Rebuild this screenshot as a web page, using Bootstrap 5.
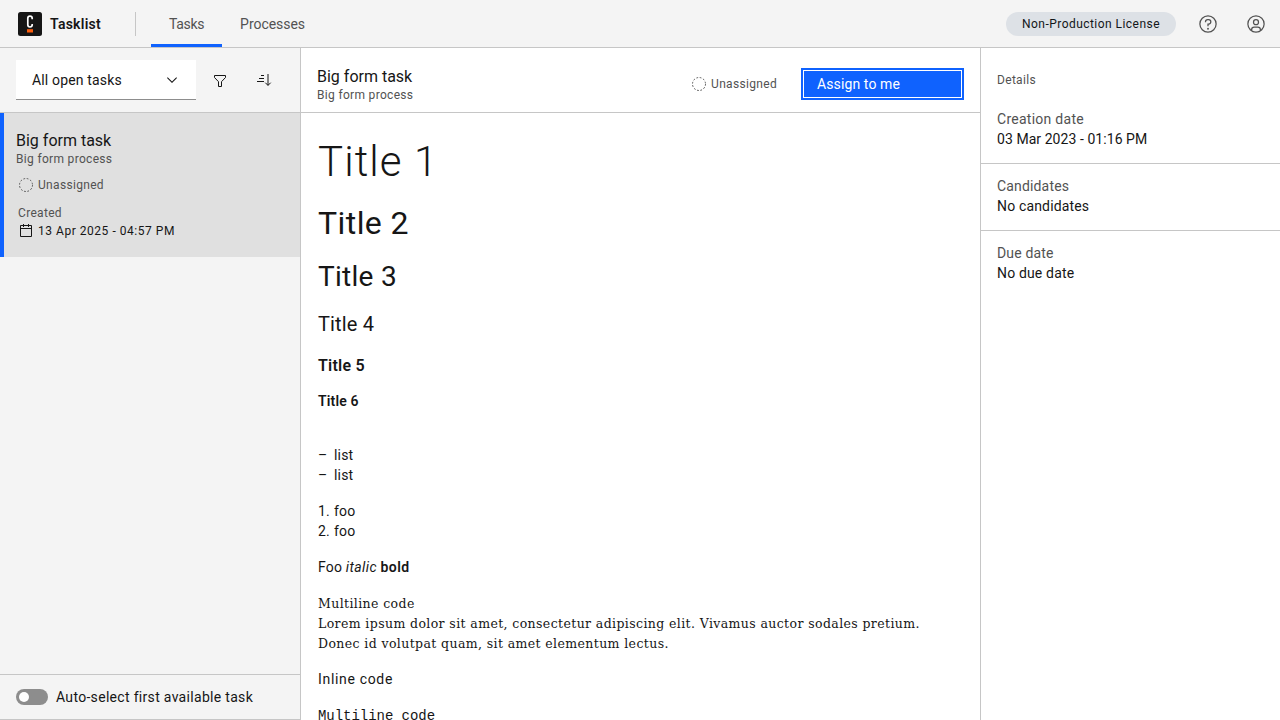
<!DOCTYPE html>
<html lang="en">
<head>
<meta charset="utf-8">
<meta name="viewport" content="width=device-width, initial-scale=1">
<title>Tasklist</title>
<link href="https://cdn.jsdelivr.net/npm/bootstrap@5.3.0/dist/css/bootstrap.min.css" rel="stylesheet">
<style>
:root{--line:#c6c6c6;--ink:#161616;--muted:#525252;--blue:#0f62fe;--layer:#f4f4f4}
body{font:400 14px/20px Roboto,"Liberation Sans",sans-serif;letter-spacing:.16px;color:var(--ink);background:#fff}
svg{display:block;flex:none}
.muted{color:var(--muted)}
.line-b{border-bottom:1px solid var(--line)}
.line-s{border-left:1px solid var(--line)}
.line-e{border-right:1px solid var(--line)}
.line-t{border-top:1px solid var(--line)}
.layer{background:var(--layer)}
.label{font-size:12px;line-height:16px;letter-spacing:.32px}
.topbar{height:48px}
.logo{margin-left:18px}
.app-name{width:51px;font-weight:600;letter-spacing:.25px}
.sep{width:1px;height:24px;background:var(--line);margin-left:34px;margin-right:15px}
.tab{height:47px;padding:3px 18px 0;border-bottom:3px solid transparent;color:var(--muted);letter-spacing:-.04px}
.tab.current{border-color:var(--blue);letter-spacing:-.33px}
.license{background:#dde1e6;height:24px;width:170px;padding:0 16px;color:#121619;margin-right:12px;letter-spacing:.46px}
.icon-btn{width:40px;height:40px}
.side{width:301px}
.filters{height:65px;padding:12px 16px}
.filter-select{width:180px;height:40px;background:#fff;border-bottom:1px solid #8d8d8d;padding:0 16px}
.task-item{height:144px;background:#e0e0e0;border-left:4px solid var(--blue);padding:17px 12px}
.task-name{font-size:16px;line-height:21px;letter-spacing:0}
.unassigned{margin-top:10px;gap:2px}
.created{margin:12px 0 0 2px}
.stamp{gap:2px;margin-top:2px}
.stamp .label{letter-spacing:.53px}
.foot{height:46px;padding:0 16px 1px;letter-spacing:.31px}
.switch{width:32px;height:16px;border-radius:8px;background:#8d8d8d;padding:3px}
.switch i{display:block;width:10px;height:10px;border-radius:50%;background:#fff}
.task-head{height:65px;padding:8px 16px 0}
.assign{width:163px;height:32px;background:var(--blue);border:2px solid var(--blue);box-shadow:inset 0 0 0 1px #fff;border-radius:0;padding:0 14px;color:#fff;text-align:left;font-size:14px;line-height:20px;letter-spacing:.11px}
.details{width:300px}
.details-title{padding:24px 16px 8px}
.detail{height:67px;padding:12px 16px}
.detail.first{height:68px;padding-top:13px}
.detail.first .muted{letter-spacing:.27px}
.detail.first .value{letter-spacing:.06px}
.form-view{padding:24px 17px 0}
.form-view h1,.form-view h2,.form-view h3,.form-view h4,.form-view h5,.form-view h6{margin:0 0 16px;font-weight:400}
.form-view h1{font-size:42px;line-height:50px;font-weight:300;letter-spacing:1.1px}
.form-view h2{font-size:32px;line-height:40px;letter-spacing:.43px}
.form-view h3{font-size:28px;line-height:36px;letter-spacing:.28px}
.form-view h4{font-size:20px;line-height:28px;margin-top:-1px;margin-bottom:17px}
.form-view h5{font-size:16px;line-height:22px;font-weight:600;letter-spacing:.25px}
.form-view h6{font-size:14px;line-height:18px;font-weight:600;margin-top:-1px}
.lists{margin-top:35px}
.li-mark{width:16px}
.form-view em{letter-spacing:.4px}
.form-view strong{letter-spacing:.41px;font-weight:600}
.slab{font-family:"DejaVu Serif","Liberation Serif",serif;font-size:12.5px;letter-spacing:.39px;padding-top:1px}
.wide{letter-spacing:.67px;margin-top:15px}
.mono{font-family:"Liberation Mono",monospace;letter-spacing:-.04px;padding-top:1px}
</style>
</head>
<body class="vh-100 overflow-hidden d-flex flex-column">
<header class="topbar layer line-b d-flex align-items-center flex-shrink-0">
  <svg class="logo" width="24" height="24" viewBox="0 0 24 24"><rect width="24" height="24" rx="2.500" fill="#161616"/><path d="M14.200 7.300V6.400a2.200 2.200 0 0 0-4.400 0v6.400a2.200 2.200 0 0 0 4.400 0v-.9" fill="none" stroke="#fff" stroke-width="1.700"/><rect x="9" y="17.200" width="6" height="3.300" fill="#fc5d0d"/></svg>
  <span class="app-name ms-2">Tasklist</span>
  <span class="sep"></span>
  <nav class="d-flex align-self-start">
    <div class="tab current d-flex align-items-center">Tasks</div>
    <div class="tab d-flex align-items-center">Processes</div>
  </nav>
  <span class="license label rounded-pill d-flex align-items-center ms-auto text-nowrap">Non-Production License</span>
  <span class="icon-btn d-flex align-items-center justify-content-center"><svg width="20" height="20" viewBox="0 0 32 32" fill="#525252"><path d="M16 2a14 14 0 1 0 14 14A14 14 0 0 0 16 2Zm0 26a12 12 0 1 1 12-12 12 12 0 0 1-12 12Z"/><circle cx="16" cy="23.500" r="1.500"/><path d="M17 8h-1.500a4.490 4.490 0 0 0-4.500 4.500V13h2v-.5a2.500 2.500 0 0 1 2.500-2.500H17a2.500 2.500 0 0 1 0 5h-2v4.500h2V17a4.500 4.500 0 0 0 0-9Z"/></svg></span>
  <span class="icon-btn d-flex align-items-center justify-content-center ms-2 me-1"><svg width="20" height="20" viewBox="0 0 32 32" fill="#525252"><path d="M16 8a5 5 0 1 0 5 5 5 5 0 0 0-5-5Zm0 8a3 3 0 1 1 3-3 3 3 0 0 1-3 3Z"/><path d="M16 2a14 14 0 1 0 14 14A14 14 0 0 0 16 2Zm-6 24.377V25a3 3 0 0 1 3-3h6a3 3 0 0 1 3 3v1.377a11.900 11.900 0 0 1-12 0Zm13.993-1.451A5 5 0 0 0 19 20h-6a5 5 0 0 0-4.992 4.926 12 12 0 1 1 15.985 0Z"/></svg></span>
</header>
<div class="d-flex flex-grow-1 overflow-hidden">
  <aside class="side layer line-e d-flex flex-column flex-shrink-0">
    <div class="filters line-b d-flex">
      <div class="filter-select d-flex align-items-center justify-content-between">All open tasks<svg width="16" height="16" viewBox="0 0 16 16"><path d="m8 11-5-5 .7-.7L8 9.600l4.300-4.300.7.7z" fill="#161616"/></svg></div>
      <span class="icon-btn d-flex align-items-center justify-content-center ms-1"><svg width="16" height="16" viewBox="0 0 16 16" fill="none" stroke="#161616" stroke-linejoin="round"><path d="M2.500 3.500h11v2l-4 4.200v4.800h-3V9.700l-4-4.200z"/></svg></span>
      <span class="icon-btn d-flex align-items-center justify-content-center ms-1"><svg width="16" height="16" viewBox="0 0 16 16" fill="none" stroke="#161616"><path d="M5 3.500h3M3 6.500h5M1 9.500h7M12 2v11.300M9.300 10.700l2.700 2.700 2.700-2.700"/></svg></span>
    </div>
    <div class="task-item">
      <div class="task-name">Big form task</div>
      <div class="label muted">Big form process</div>
      <div class="d-flex align-items-center unassigned"><svg width="20" height="16" viewBox="-2 0 20 16"><circle cx="8" cy="8" r="6.500" fill="none" stroke="#525252" stroke-dasharray="1.700 1.703"/></svg><span class="label muted">Unassigned</span></div>
      <div class="label muted created">Created</div>
      <div class="d-flex align-items-center stamp"><svg width="20" height="16" viewBox="-4 0 40 32"><path fill="#161616" d="M26 4h-4V2h-2v2h-8V2h-2v2H6a2 2 0 0 0-2 2v20a2 2 0 0 0 2 2h20a2 2 0 0 0 2-2V6a2 2 0 0 0-2-2Zm0 22H6V12h20Zm0-16H6V6h4v2h2V6h8v2h2V6h4Z"/></svg><span class="label">13 Apr 2025 - 04:57 PM</span></div>
    </div>
    <div class="foot line-t line-b d-flex align-items-center mt-auto"><span class="switch"><i></i></span><span class="ms-2">Auto-select first available task</span></div>
  </aside>
  <main class="flex-grow-1">
    <div class="task-head line-b d-flex align-items-center">
      <div><div class="task-name">Big form task</div><div class="label muted">Big form process</div></div>
      <div class="d-flex align-items-center ms-auto me-4"><svg class="me-1" width="16" height="16" viewBox="0 0 16 16"><circle cx="8" cy="8" r="6.500" fill="none" stroke="#525252" stroke-dasharray="1.700 1.703"/></svg><span class="label muted">Unassigned</span></div>
      <button class="btn assign" type="button">Assign to me</button>
    </div>
    <div class="form-view">
      <h1>Title 1</h1>
      <h2>Title 2</h2>
      <h3>Title 3</h3>
      <h4>Title 4</h4>
      <h5>Title 5</h5>
      <h6>Title 6</h6>
      <div class="lists">
        <div class="d-flex"><span class="li-mark">–</span>list</div>
        <div class="d-flex"><span class="li-mark">–</span>list</div>
        <div class="d-flex mt-3"><span class="li-mark">1.</span>foo</div>
        <div class="d-flex"><span class="li-mark">2.</span>foo</div>
      </div>
      <p class="mt-3 mb-0">Foo <em>italic</em> <strong>bold</strong></p>
      <p class="mt-3 mb-0 slab">Multiline code<br>Lorem ipsum dolor sit amet, consectetur adipiscing elit. Vivamus auctor sodales pretium.<br>Donec id volutpat quam, sit amet elementum lectus.</p>
      <p class="mb-0 wide">Inline code</p>
      <p class="mt-3 mb-0 mono">Multiline code</p>
    </div>
  </main>
  <aside class="details line-s flex-shrink-0">
    <div class="label muted details-title">Details</div>
    <div class="detail first line-b"><div class="muted">Creation date</div><div class="value">03 Mar 2023 - 01:16 PM</div></div>
    <div class="detail line-b"><div class="muted">Candidates</div><div>No candidates</div></div>
    <div class="detail"><div class="muted">Due date</div><div>No due date</div></div>
  </aside>
</div>
<script src="https://cdn.jsdelivr.net/npm/bootstrap@5.3.0/dist/js/bootstrap.bundle.min.js"></script>
</body>
</html>
